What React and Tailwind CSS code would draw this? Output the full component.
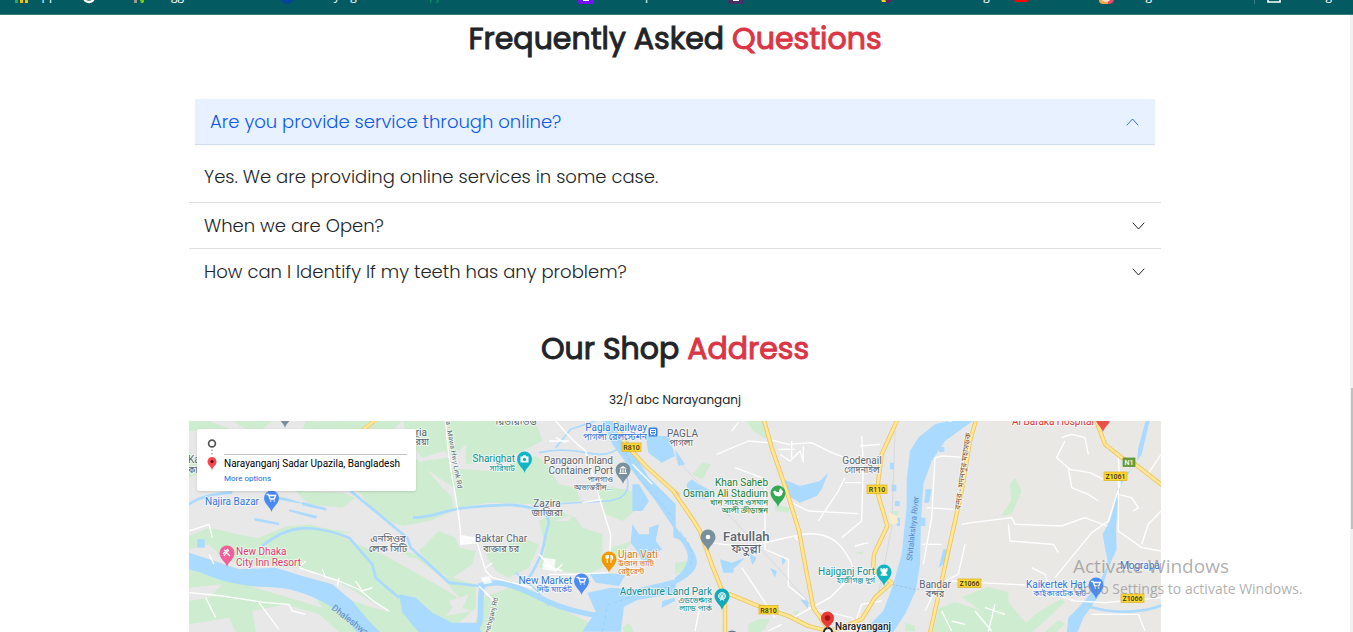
import { useState } from "react";

const bookmarks = [
  { label: "Apps", width: "w-[68px]", icon: "apps" },
  { label: "", width: "w-[51px]", icon: "google" },
  { label: "Blogger", width: "w-[146px]", icon: "envato" },
  { label: "Conveying", width: "w-[150px]", icon: "blue" },
  { label: "W3Schools", width: "w-[148px]", icon: "slashes" },
  { label: "Bootstrap", width: "w-[150px]", icon: "bootstrap" },
  { label: "Hosted", width: "w-[152px]", icon: "violet" },
  { label: "Material Learn g", width: "w-[134px]", icon: "yellow" },
  { label: "YouTube", width: "w-[85px]", icon: "youtube" },
  { label: "Instagram", width: "w-[155px]", icon: "instagram" },
];

function BookmarkIcon({ name }) {
  return (
    <svg className="size-4 shrink-0" viewBox="0 0 16 16" aria-hidden="true">
      {name === "apps" && (
        <g>
          <path d="M0 12h3v3H0z" fill="#34a853" />
          <path d="M5 12h3v3H5zM10 12h3v3h-3z" fill="#fbbc05" />
        </g>
      )}
      {name === "google" && <circle cx="6" cy="9" r="5" fill="none" stroke="#fff" strokeWidth="2.5" />}
      {name === "envato" && (
        <g>
          <path d="M0 2h3v13H0z" fill="#999" />
          <path d="M5 9l5 2v3l-1 1H7z" fill="#76c80a" />
        </g>
      )}
      {name === "blue" && <circle cx="7" cy="9" r="7" fill="#06439a" />}
      {name === "slashes" && <path d="M2 9l-2 6M9 9l-2 6" stroke="#04875f" strokeWidth="2" />}
      {name === "bootstrap" && (
        <g>
          <rect width="16" height="16" rx="2" fill="#7610f8" />
          <path d="M5 4h6v9H5z" fill="#fff" />
        </g>
      )}
      {name === "violet" && (
        <g>
          <rect width="16" height="16" rx="3" fill="#4b2f6b" />
          <path d="M5 4h6v9H5z" fill="#fff" />
        </g>
      )}
      {name === "yellow" && (
        <g>
          <path d="M5 5h6v8l-3 2H5z" fill="#6a1b6e" />
          <path d="M0 8l4 0 2 6H2z" fill="#f7dd10" />
        </g>
      )}
      {name === "youtube" && <rect y="2" width="15" height="12" rx="3" fill="#f00" />}
      {name === "instagram" && (
        <g>
          <rect width="15" height="16" rx="5" fill="#ed4c67" />
          <path d="M0 8h9v8H4q-4 0-4-4z" fill="#f9a545" />
          <circle cx="7" cy="9" r="5" fill="#fde3d2" />
        </g>
      )}
      {name === "list" && <path d="M1 2h12v12H1z" fill="none" stroke="#fff" strokeWidth="1.6" />}
    </svg>
  );
}

function BookmarksBar() {
  return (
    <nav
      aria-label="Bookmarks"
      className="flex h-[15px] shrink-0 items-end overflow-hidden border-b border-[#3b7c82] bg-[#045a61] pb-[10px] pl-[15px] font-['Open_Sans',sans-serif] text-[12px] leading-4 text-white"
    >
      {bookmarks.map((b) => (
        <a key={b.icon} href="#" className={`flex shrink-0 gap-[3px] ${b.width}`}>
          <BookmarkIcon name={b.icon} />
          <span>{b.label}</span>
        </a>
      ))}
      <a href="#" className="flex shrink-0 gap-1 border-l border-[#3b7c82] pl-3">
        <BookmarkIcon name="list" />
        <span>Reading list</span>
      </a>
    </nav>
  );
}

function Chevron({ open }) {
  return (
    <svg
      className={open ? "h-[14px] w-[14px] rotate-180 text-[#2a72e8]" : "h-[14px] w-[14px] text-[#212529]"}
      viewBox="0 0 14 14"
      fill="none"
      stroke="currentColor"
      strokeWidth="1"
      strokeLinecap="round"
      strokeLinejoin="round"
      aria-hidden="true"
    >
      <path d={open ? "M2 4l5.500 6 5.500-6" : "M1 4l5.500 6 5.500-6"} />
    </svg>
  );
}

const faqs = [
  { q: "Are you provide service through online?", a: "Yes. We are providing online services in some case." },
  { q: "When we are Open?", a: "We are open every day." },
  { q: "How can I Identify If my teeth has any problem?", a: "Visit us for a regular check." },
];

function Faq() {
  const [active, setActive] = useState(0);
  return (
    <div className="mt-[40px] text-[18px] leading-[27px] text-[#212529]">
      {faqs.map((f, i) => {
        const open = i === active;
        return (
          <div key={f.q} className={i < faqs.length - 1 ? "border-b border-[#dfdfdf]" : ""}>
            <h3 className={open ? "px-[6px]" : ""}>
              <button
                type="button"
                aria-expanded={open}
                onClick={() => setActive(open ? -1 : i)}
                className={
                  open
                    ? "flex h-[46px] w-full items-center justify-between border-b border-[#cfdcec] bg-[#e7f1ff] px-[15px] text-left font-light text-[#0c5ae6]"
                    : "flex h-[45px] w-full items-center justify-between px-[15px] text-left font-light"
                }
              >
                <span>{f.q}</span>
                <Chevron open={open} />
              </button>
            </h3>
            {open && <p className="px-[15px] pt-[18px] pb-3 font-light">{f.a}</p>}
          </div>
        );
      })}
    </div>
  );
}

const glyphs = {
  cart: <path d="M-4.500-3.500h1.600l1.600 4.500h4l1.500-3.500h-6M-.8 3h.1M2.700 3h.1" fill="none" stroke="#fff" strokeWidth="1.300" strokeLinecap="round" />,
  camera: (
    <g>
      <path d="M-4-2.500h2l1-1.200h2l1 1.200h2v6h-8z" fill="#fff" />
      <circle cy=".4" r="1.600" fill="#12a9b8" />
    </g>
  ),
  bank: <path d="M-4-1.500L0-4l4 2.500zM-3-.8h1.200v3H-3zM-.6-.8H.6v3H-.6zM1.800-.8H3v3H1.800zM-4 2.700h8v1.200h-8z" fill="#fff" />,
  food: <path d="M-3-4v3h2.400v-3M-1.800-4v8M2-4v8M2-4q2 1 1.600 4H2" fill="none" stroke="#fff" strokeWidth="1.100" />,
  hotel: <path d="M-4 1L1-4M-3 3l2-3 2 1 2 2M-1 0l3-3M-3-3l2 1" fill="none" stroke="#fff" strokeWidth="1.200" />,
  wheel: (
    <g fill="none" stroke="#fff">
      <circle r="3.300" strokeWidth="1.100" />
      <path d="M-3 0h6M0-3v6M-2-2l4 4M2-2l-4 4M0 1l-2 4M0 1l2 4" strokeWidth=".7" />
    </g>
  ),
  stadium: <path d="M-5-1.500l2-1 2 1.500 2 0 0-2 2-2 .5 2 1.500 1-1 4-3 1.500-4-1z" fill="#fff" />,
  dot: <circle r="2.300" fill="#fff" />,
  fort: <path d="M-3.500-4h1.700v1.200H-.8V-4H.8v1.200h1V-4h1.700v3l-1.200 1v2h1v1.700h-6.600V2h1V0l-1.200-1z" fill="#fff" />,
};

function Pin({ x, y, color, glyph }) {
  return (
    <g transform={`translate(${x} ${y})`}>
      <path d="M0 14C-1 9-7.500 6-7.500 0a7.500 7.500 0 0115 0C7.500 6 1 9 0 14z" fill={color} />
      {glyphs[glyph]}
    </g>
  );
}

function Badge({ x, y, w, text, green }) {
  return (
    <g>
      <rect x={x} y={y} width={w} height="8.500" fill={green ? "#689f38" : "#fdd835"} stroke={green ? "#5a8a30" : "#d9ae20"} strokeWidth=".7" />
      <text x={x + w / 2} y={y + 7} fontSize="7" fontWeight="500" textAnchor="middle" fill={green ? "#fff" : "#3b3520"}>
        {text}
      </text>
    </g>
  );
}

const BLUE = "#3277dc";
const TEAL = "#0e8f96";
const GREY = "#5b6470";
const GREEN = "#188038";

const labels = [
  { x: 205, y: 505, t: "Najira Bazar", c: BLUE },
  { x: 236, y: 555, t: "New Dhaka", c: "#df3b77" },
  { x: 236, y: 566, t: "City Inn Resort", c: "#df3b77" },
  { x: 427, y: 436, t: "ria", c: GREY, a: "end" },
  { x: 429, y: 445, t: "রিয়া", c: GREY, a: "end", s: 9 },
  { x: 188, y: 463, t: "Ka", c: GREY },
  { x: 188, y: 473, t: "কা", c: GREY, s: 9 },
  { x: 388, y: 542, t: "এনসিওর", c: GREY, a: "middle", s: 10 },
  { x: 388, y: 552, t: "লেক সিটি", c: GREY, a: "middle", s: 10 },
  { x: 516, y: 425, t: "রিভারভিউ", c: GREY, a: "middle", s: 10 },
  { x: 515, y: 462, t: "Sharighat", c: TEAL, a: "end" },
  { x: 515, y: 471, t: "সারিঘাট", c: TEAL, a: "end", s: 8 },
  { x: 613, y: 464, t: "Pangaon Inland", c: GREY, a: "end" },
  { x: 613, y: 474, t: "Container Port", c: GREY, a: "end" },
  { x: 613, y: 482, t: "পানগাও", c: GREY, a: "end", s: 8 },
  { x: 613, y: 490, t: "অভ্যন্তরীন...", c: GREY, a: "end", s: 8 },
  { x: 647, y: 431, t: "Pagla Railway", c: BLUE, a: "end" },
  { x: 647, y: 440, t: "পাগলা রেলস্টেশন", c: BLUE, a: "end", s: 9 },
  { x: 667, y: 437, t: "PAGLA", c: GREY, s: 10 },
  { x: 681, y: 446, t: "পাগলা", c: GREY, a: "middle", s: 9 },
  { x: 547, y: 507, t: "Zazira", c: GREY, a: "middle" },
  { x: 547, y: 516, t: "জাজিরা", c: GREY, a: "middle", s: 10 },
  { x: 501, y: 542, t: "Baktar Char", c: GREY, a: "middle" },
  { x: 501, y: 552, t: "বাক্তার চর", c: GREY, a: "middle", s: 9 },
  { x: 618, y: 558, t: "Ujan Vati", c: "#dc7b12" },
  { x: 618, y: 566, t: "উজান ভাটি", c: "#dc7b12", s: 8 },
  { x: 618, y: 574, t: "রেষ্টুরেন্ট", c: "#dc7b12", s: 8 },
  { x: 572, y: 584, t: "New Market", c: BLUE, a: "end" },
  { x: 572, y: 592, t: "নিউ মার্কেট", c: BLUE, a: "end", s: 8 },
  { x: 712, y: 595, t: "Adventure Land Park", c: TEAL, a: "end" },
  { x: 712, y: 603, t: "এডভেঞ্চার", c: TEAL, a: "end", s: 8 },
  { x: 712, y: 611, t: "ল্যান্ড পার্ক", c: TEAL, a: "end", s: 8 },
  { x: 768, y: 486, t: "Khan Saheb", c: GREEN, a: "end" },
  { x: 768, y: 497, t: "Osman Ali Stadium", c: GREEN, a: "end" },
  { x: 768, y: 505, t: "খান সাহেব ওসমান", c: GREEN, a: "end", s: 8 },
  { x: 768, y: 513, t: "আলী ক্রীড়াঙ্গন", c: GREEN, a: "end", s: 8 },
  { x: 723, y: 541, t: "Fatullah", c: GREY, s: 13, w: 500 },
  { x: 746, y: 553, t: "ফতুল্লা", c: GREY, a: "middle", s: 12 },
  { x: 862, y: 464, t: "Godenail", c: GREY, a: "middle" },
  { x: 862, y: 473, t: "গোদনাইল", c: GREY, a: "middle", s: 9 },
  { x: 875, y: 575, t: "Hajiganj Fort", c: TEAL, a: "end" },
  { x: 875, y: 583, t: "হাজীগঞ্জ দুর্গ", c: TEAL, a: "end", s: 8 },
  { x: 935, y: 588, t: "Bandar", c: GREY, a: "middle" },
  { x: 935, y: 597, t: "বন্দর", c: GREY, a: "middle", s: 9 },
  { x: 1094, y: 425, t: "Al Baraka Hospital", c: "#d93a36", a: "end" },
  { x: 1086, y: 588, t: "Kaikertek Hat", c: BLUE, a: "end" },
  { x: 1086, y: 596, t: "কাইকারটেক হাট", c: BLUE, a: "end", s: 8 },
  { x: 1120, y: 569, t: "Mograpara", c: BLUE },
  { x: 835, y: 630, t: "Narayanganj", c: "#222", w: 500 },
];

const HIGHWAYS =
  "M265-10L290 80 335 210 372 330 392 440 415 560 460 625M-5 210L50 290 75 330 110 430 150 530V640M160 518L250 555 340 585 400 615 460 630M670-10L620 100 606 210 637 315 597 400 594 445 650 485 600 530 560 595 500 620 460 630";
const EAST_ROADS = "M905-10L885 60 862 200 838 310 800 480 762 650M1262-5L1290 70 1340 110 1380 130 1465 195";

function MapDrawing() {
  return (
    <svg
      className="h-full w-full"
      viewBox="189 421 972 211"
      preserveAspectRatio="xMidYMin slice"
      role="img"
      aria-label="Map of Narayanganj"
      fontFamily="Roboto, 'Noto Sans Bengali', 'Noto Sans', sans-serif"
    >
      <rect x="189" y="421" width="972" height="300" fill="#e8e8e8" />
      <path d="M985 421h176v300H935z" fill="#eae8e5" />

      {/* Western villages, Dhaleshwari and Buriganga */}
      <g transform="translate(189 421) scale(.333333)" strokeLinejoin="round">
        <g fill="#ceeccf">
          <path d="M0 0H60L140 30H0zM130 0H250L200 40zM350 0H640L600 40 500 50 340 30zM0 90L50 150 0 170z" />
          <path d="M500 200L560 160 680 110 700 130 760 200 790 230 795 270 720 300 640 315 600 300 545 260zM700 120L780 110 795 200 690 130z" />
          <path d="M640 0H830L840 60 790 110 765 90 700 110 660 60zM830 0L1040 0 1060 60 960 110 830 130zM780 140L900 150 1040 105 1075 130 1110 190 1160 200 1175 240 1040 250 900 245 805 260z" />
          <path d="M0 345L60 320 170 345 210 350 330 300 400 320 520 340 560 370 600 380 680 400 750 460 860 490 860 560 780 633H0z" />
          <path d="M690 390L750 330 800 350 810 380 860 390 850 430 790 470 740 450zM1050 300L1110 270 1160 290 1180 320 1240 340 1240 440 1200 455 1150 455 1050 440 1070 380zM1100 300h40l10-20zM1265 380L1330 360 1290 410 1265 400zM1220 190L1330 210 1350 260 1300 300 1250 280zM890 400L1000 350 1050 370 1020 440 960 470 920 450zM880 530L960 500 1050 520 1130 570 1210 610 1180 633H850zM1300 620l20-15 15 28h-30z" />
          <path d="M320 210L460 215 500 230 460 260 360 250z" />
        </g>
        <g fill="#e8e8e8">
          <path d="M0 170L110 210 300 215 440 290 380 310 230 320 130 300 0 300zM0 385L60 370 90 400 150 430 330 440 400 460 480 500 560 550 610 575 550 560 440 520 350 490 260 465 100 450 0 425zM440 340L540 330 620 370 670 420 640 430 580 400 530 380zM0 500L100 490 60 530 0 540zM190 570L290 550 390 580 450 633H200zM0 610L120 590 140 633H0zM180 495L300 500 380 530 400 560 300 530zM780 540l60-20-20 40 30 10-80 15 20-25zM600 410l80 0 80 60 60 70-60-40z" />
        </g>
        <path d="M0 395L60 415 150 445 260 440 340 465 430 490 490 540 540 600 600 660H520C480 590 430 550 350 520S230 505 150 490 60 460 0 445zM630 520l50 10 50 45 60 30 70 0 20 30H690l-50-60zM195 290l75 15 0 8-72-14zM340 243l72 18 0 8-72-16zM300 265l85 20-5 8-80-22zM230 225l60 5 60 20-60-10zM25 355h22v25H25z" fill="#aadaff" />
        <path d="M485 210L570 280 630 330 655 350 665 380 720 430 780 485 870 495M220 375Q280 325 340 322T480 350L550 430 560 470 630 530M672 290C740 290 760 265 850 258S980 245 1040 265 1075 320 1070 340 1070 390 1020 470M0 250Q40 220 130 215" fill="none" stroke="#aadaff" strokeWidth="8" />
        <path d="M1030 255Q1150 245 1250 240T1300 130M1050 95Q1120 80 1190 95T1290 80M1100 80L1145 25 1220 0M980 455l60 50 40 50" fill="none" stroke="#aadaff" strokeWidth="5" />
        <path d="M870 495C930 475 960 490 1010 510S1090 560 1230 585" fill="none" stroke="#aadaff" strokeWidth="16" />
        <path d="M880 495C870 540 880 590 870 610S820 633 810 650" fill="none" stroke="#aadaff" strokeWidth="17" />
        <path d="M1240 0h50l40 90 50 80 80 80v80l-60-90-70-90-60-80zM1195 515l70-15 70 5 125-30v42l-115 20-40 20-10 75H1180l40-60zM1330 310l20 30 30 0 0-20 30-10-10 50 20 25-40 20 10 20-20 10-30-50-15-20zM1330 190l20 0 30 50-20 30-30 0zM1370 45l70 0 18 60-40 20-40-30zM1200 455l110 5-20 35-70-10zM1420 540l38-10v10l-40 20zM1430 330l28 20z" fill="#aadaff" />
        <path d="M0 330L60 310 70 350M75 430l-15-30M330 440L350 420M330 440l60 20 60 20 60 25 50 40 40 25M400 445l10 25M450 470l-5 25M500 480l20 30 30-10M0 515L100 525 230 545 300 550 310 570 350 580M50 530l30 60M210 545l60 80M770 0Q775 90 795 200T815 350L860 350 890 450 910 470 1030 500M815 350l0 20 50-5M1100 0Q1150 60 1190 90L1240 260 1265 340 1260 455 1150 460 1080 460M1080 60h60M1100 50l30 15M1050 400l50 50 20-20M1060 430l60 20M870 495l40 40-10 100M1330 130l60 60M1180 245l60-10M890 440l20-15" fill="none" stroke="#fff" strokeWidth="4" />
        <path d="M810 340l50 10 5 15-50 5zM875 470l25-5 10 20-25 5zM1065 410l35 5-5 35-35-5z" fill="#fff" fillOpacity=".8" />
        <path d="M1290 60l60 110 110 130M1240 633l15-80 110-40 95-20" fill="none" stroke="#8fc5ee" strokeWidth="1.500" strokeDasharray="12 8" />
        <path d="M520 28L565-8" stroke="#f2c866" strokeWidth="12" />
        <path d="M520 28L565-8" stroke="#ffe795" strokeWidth="8" />
        <path d="M1265-25L1310 70 1370 135 1470 225" fill="none" stroke="#efc35f" strokeWidth="13" />
        <path d="M1265-25L1310 70 1370 135 1470 225" fill="none" stroke="#ffe795" strokeWidth="8" />
      </g>

      {/* City centre, Shitalakshya and the eastern side */}
      <g transform="translate(675 421) scale(.333333)" strokeLinejoin="round">
        <path d="M215 0h50l10 55-40-25zM52 160l30-35 25 5-25 45zM300 250l45 10-5 15-40-5zM0 425l40-5 10 20-50 20zM220 610l30-15 35-2-15 30-20 15h-30zM355 573l15-5v30zM540 395l25-5-5 12zM690 605l30 10v16h-30zM650 270l20 0-5 20zM1005 190l15-20 20 40-30 70-32 5 30-45zM775 633l15-70 50-20 60 20 30 15-70-50 80-30 60 15 0 30 50 60 10 30zM1020 633l70-60 70-40 10 10-70 65-30 25zM1110 633l40-35 20 10-25 25z" fill="#ceeccf" />
        <path d="M-5 310L20 340Q70 400 65 430T0 490V470Q50 430 35 390T-5 350zM35 190l15-15 20 15 40 20-20 25-50-10zM325 175l50 20 60-15 25-25-20 50-15 20-50 20-35-20zM135 415l35 10 40-15-35 35 0 10-30 0zM220 395l25 15-12 22zM285 440l20 10-5 20zM375 535l25 5v25zM320 405l12 15-10 12zM645 125h12v20h-12zM650 190l14 3v18h-14zM660 240h14v15h-14zM665 290h10v25h-10zM792 78h16v15h-16zM752 205h18l-8 40h-14zM737 290h14v25h-14zM805 385h10l-4 40-20 15zM0 85l30 45-20 5z" fill="#aadaff" />
        <path d="M840-5L780 10 730 50 705 90 695 180 695 260 680 400 655 490 625 570 590 605 570 640H650L690 580 722 510 735 430 738 300 745 190 770 120 810 60 900-5z" fill="#aadaff" />
        <path d="M1413-5L1390 80 1385 130 1330 180 1320 250 1305 300 1283 340 1288 370 1300 430 1270 490 1220 550 1180 590 1175 640H1205L1225 590 1275 520 1300 440 1325 385 1323 320 1335 195 1400 100 1425-5z" fill="#aadaff" />
        <path d="M1220 550Q1290 575 1360 572T1465 550" fill="none" stroke="#aadaff" strokeWidth="8" />
        <path d="M125 100L220 60 280 65M280 55l60 15 70-5 60 30 80 30M170 30l20-25M180 140l80 30M340 240l60 30 150 8M315 100l30 20 30-30 10 30M310 85l50 0M350 60v50M385 75v50M110 365q100 20 180-5l90-20q80-10 120 40t35 80l-70 70-110 60M560 45l5 80-5 175-60 50M555 75l60-5M510 170l-20 40-60 90M270 180v205l70 30 0 80 50 40M400 560l130 30 30 40M200 440l60 90 40 60M360 310l20 30-20 10 20 15M360 300l10-15M540 375l40-10M620 540l-60 10-30 85M750 570l40-80M745 430l25-140 10-180 20-5 80 5M755 260l80 5M740 370h60M510 185h50M80 530l-20 100M860 310l30-5 120-15 10 20 140 5 70-25 65 25M870 370l-20 90-40 20M1000 310l5 50 130 10 15 25M830 480l80 5 210 10M1160 50l30-10 40 10 10 50M1170 60l-25 50 40 35 60 10 40 20M1180 140l10 60 50 20 30 20M1330 110l5 80-35 110-50 35L1140 470M1330 180v150l70 50 58 10M1330 220l40 10 20 30-15 10M1458 100l-40 60M1400 370l20-60 38-40M1140 520l60 20 90 5 168-15M1250 580h140l20 50M1070 440l40 20 10 30M820 0l10 0M900 570l50 60M930 560l60 20M960 550l-20 81M800 570l30 60M830 600l40 10M280 630l40-20" fill="none" stroke="#fff" strokeWidth="4" />
        <path d="M0 110L150 270 300 430 450 600M660 30l-10 290-40 200" fill="none" stroke="#cfd2d6" strokeWidth="2" />
        <path d="M650 490l70 15 60-5" fill="none" stroke="#9ab8d7" strokeWidth="2" strokeDasharray="8 5" />
        <path d="M15 330q50 60 30 110" fill="none" stroke="#8fc5ee" strokeWidth="1.500" strokeDasharray="12 8" />
        <path d="M640 275l25 10 5 20-20 5zM545 575l25 10-10 15z" fill="#fdeecb" />
        <path d={HIGHWAYS} fill="none" stroke="#efc35f" strokeWidth="13" />
        <path d={EAST_ROADS} fill="none" stroke="#efc35f" strokeWidth="13" />
        <path d={HIGHWAYS} fill="none" stroke="#ffe795" strokeWidth="8" />
        <path d={EAST_ROADS} fill="none" stroke="#ffe795" strokeWidth="8" />
      </g>

      <Badge x={622} y={443} w={19} text="R810" />
      <Badge x={867} y={485} w={20} text="R110" />
      <Badge x={759} y={605.500} w={19} text="R810" />
      <Badge x={1123} y={458} w={12} text="N1" green />
      <Badge x={1104} y={472} w={23} text="Z1061" />
      <Badge x={958} y={579} w={23} text="Z1066" />
      <Badge x={1121} y={594} w={23} text="Z1066" />

      <g stroke="#fff" strokeOpacity=".6" strokeWidth="2" strokeLinejoin="round" paintOrder="stroke">
        {labels.map((l) => (
          <text key={`${l.x}-${l.y}`} x={l.x} y={l.y} fill={l.c} fontSize={l.s || 10} fontWeight={l.w || 400} textAnchor={l.a || "start"}>
            {l.t}
          </text>
        ))}
      </g>
      <text transform="translate(331 609) rotate(38)" fontSize="9" fill="#5b87bd">Dhaleshwari</text>
      <text transform="translate(912 561) rotate(-84)" fontSize="8" fill="#5b87bd">Shitalakshya River</text>
      <g stroke="#fff" strokeOpacity=".6" strokeWidth="2" strokeLinejoin="round" paintOrder="stroke">
        <text transform="translate(443 406) rotate(80)" fontSize="7" fill={GREY}>Dhaka - Mawa Hwy Link Rd</text>
        <text transform="translate(487 643) rotate(-76)" fontSize="7" fill={GREY}>Munshiganj Rd</text>
        <text transform="translate(960 510) rotate(-82)" fontSize="8" fill="#8a5b33">বন্দর - মদনপুর মহাসড়ক</text>
      </g>

      <Pin x={271.500} y={498} color="#4a8af4" glyph="cart" />
      <Pin x={227} y={553} color="#f0609a" glyph="hotel" />
      <Pin x={524.500} y={459} color="#12b5c6" glyph="camera" />
      <Pin x={623} y={470} color="#78909c" glyph="bank" />
      <Pin x={609} y={559} color="#f29900" glyph="food" />
      <Pin x={581.500} y={581} color="#4a8af4" glyph="cart" />
      <Pin x={722} y={596} color="#12a9b8" glyph="wheel" />
      <Pin x={778} y={493} color="#34a853" glyph="stadium" />
      <Pin x={708} y={537} color="#78909c" glyph="dot" />
      <Pin x={884} y={572} color="#12b5c6" glyph="fort" />
      <Pin x={1096} y={585} color="#4a8af4" glyph="cart" />
      <Pin x={1103} y={418} color="#ea4f4a" glyph="dot" />
      <Pin x={285} y={414} color="#78909c" glyph="dot" />
      <Pin x={732} y={638} color="#607d8b" glyph="dot" />
      <g>
        <rect x="648.500" y="427.500" width="9" height="9" rx="1.500" fill="#2f7de9" />
        <path d="M650.500 429.500h5v4.500h-5zM651 435.500l1-1.500M655 435.500l-1-1.500" fill="none" stroke="#fff" />
        <path d="M650.500 431.500h5" stroke="#fff" />
      </g>
      <circle cx="828" cy="632" r="4" fill="#fff" stroke="#222" strokeWidth="2" />
      <path d="M827.500 630c-.5-5-6.500-6-6.500-12a6.500 6.500 0 0113 0c0 6-6 7-6.500 12z" fill="#e93a33" />
      <circle cx="827.500" cy="618" r="2.700" fill="#a61511" />
    </svg>
  );
}

function DirectionsCard() {
  return (
    <div className="absolute top-2 left-2 flex h-[62px] w-[219px] gap-[7px] rounded-xs bg-white pt-2 pr-[9px] pl-[10px] font-['Roboto',sans-serif] shadow">
      <svg className="mt-[1px] h-9 w-[10px] shrink-0" viewBox="0 0 10 36" aria-hidden="true">
        <circle cx="5" cy="5.500" r="3.400" fill="none" stroke="#555" strokeWidth="1.700" />
        <path d="M5 11.500v6" stroke="#bbb" strokeWidth="1.800" strokeDasharray="1.500 2" />
        <path d="M5 33c-.3-5-4.500-5-4.500-9.500a4.500 4.500 0 019 0C9.500 28 5.300 28 5 33z" fill="#f8484f" />
        <circle cx="5" cy="23.500" r="1.600" fill="#5c0b0b" />
      </svg>
      <div className="flex min-w-0 flex-1 flex-col">
        <input aria-label="Starting point" className="h-[18px] w-full border-b border-[#c4c4c4] text-[10px] outline-none" />
        <span className="mt-[2px] text-[10px] leading-[14px] whitespace-nowrap text-black">
          Narayanganj Sadar Upazila, Bangladesh
        </span>
        <a href="#" className="mt-[1px] text-[8px] leading-[14px] text-[#1a6be8]">
          More options
        </a>
      </div>
    </div>
  );
}

function SectionTitle({ children, accent, className }) {
  return (
    <h2 className={`text-center text-[30px] leading-[40px] font-normal [-webkit-text-stroke:1px] ${className}`}>
      {children} <span className="text-[#dc3545]">{accent}</span>
    </h2>
  );
}

export default function App() {
  return (
    <div className="relative flex h-screen flex-col overflow-hidden bg-white font-['Poppins','Inter',sans-serif] text-[#212529]">
      <BookmarksBar />
      <div className="flex min-h-0 flex-1">
        <main className="mx-auto flex min-w-0 max-w-[972px] flex-1 flex-col">
          <SectionTitle accent="Questions" className="mt-[4px]">
            Frequently Asked
          </SectionTitle>
          <Faq />
          <SectionTitle accent="Address" className="mt-[35px]">
            Our Shop
          </SectionTitle>
          <p className="mt-[22px] mb-[12px] text-center text-[12px] leading-[18px]">32/1 abc Narayanganj</p>
          <section aria-label="Shop location" className="relative min-h-0 flex-1 overflow-hidden">
            <MapDrawing />
            <DirectionsCard />
          </section>
        </main>
        <div className="w-[3px] shrink-0 bg-[#f1f1f1] pt-[373px] pl-[1px]">
          <div className="h-[141px] bg-[#c1c1c1]" />
        </div>
      </div>
      <aside className="pointer-events-none absolute right-[44px] bottom-[33px] w-[236px] font-['Open_Sans',sans-serif] whitespace-nowrap text-[#8d8d8d]/70">
        <p className="text-[19px] leading-[26px]">Activate Windows</p>
        <p className="text-[14px] leading-[20px]">Go to Settings to activate Windows.</p>
      </aside>
    </div>
  );
}
